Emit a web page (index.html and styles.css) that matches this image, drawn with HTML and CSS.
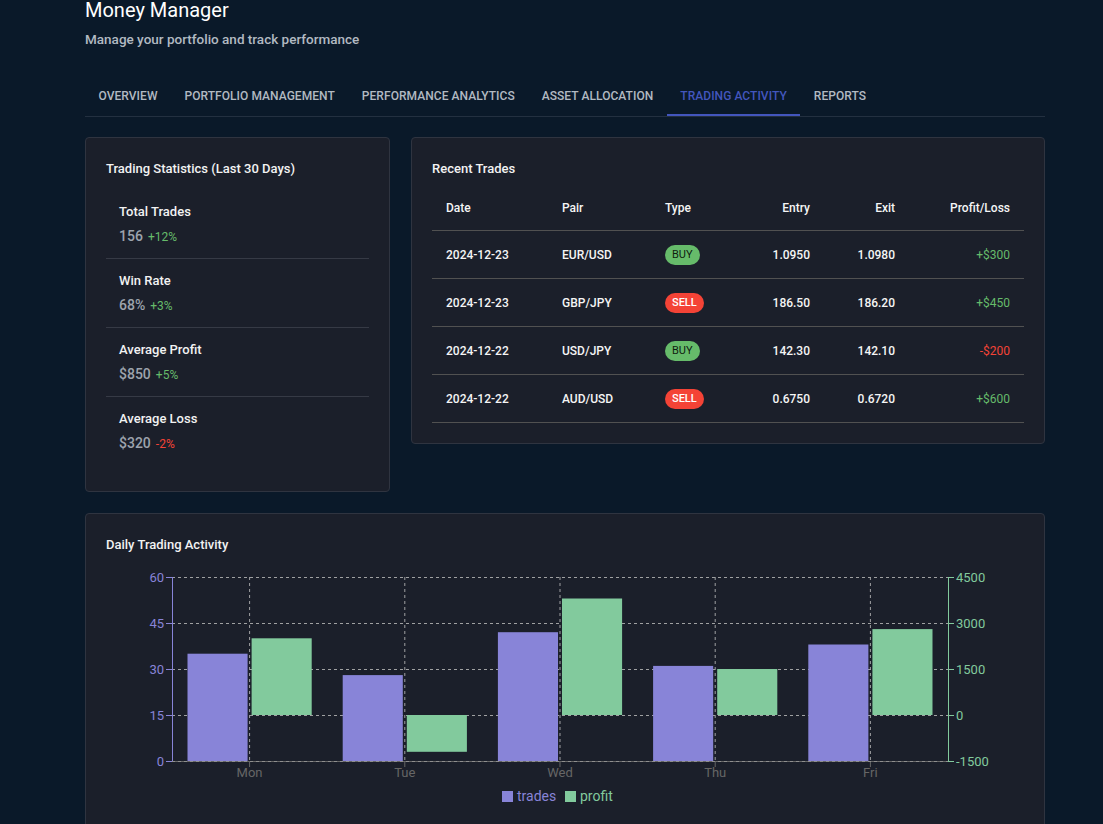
FILE: index.html
```html
<!DOCTYPE html>
<html lang="en">
<head>
<meta charset="utf-8">
<title>Money Manager</title>
<link rel="stylesheet" href="styles.css">
</head>
<body>
<div class="page">
  <header class="head">
    <h1 class="title">Money Manager</h1>
    <p class="subtitle">Manage your portfolio and track performance</p>
  </header>

  <nav class="tabs">
    <span class="tab">Overview</span>
    <span class="tab">Portfolio Management</span>
    <span class="tab">Performance Analytics</span>
    <span class="tab">Asset Allocation</span>
    <span class="tab active">Trading Activity</span>
    <span class="tab">Reports</span>
  </nav>

  <div class="grid">
    <section class="card">
      <h2 class="card-title">Trading Statistics (Last 30 Days)</h2>
      <ul class="stats">
        <li class="stat">
          <div class="stat-label">Total Trades</div>
          <div class="stat-value">156 <span class="chg up">+12%</span></div>
        </li>
        <li class="stat">
          <div class="stat-label">Win Rate</div>
          <div class="stat-value">68% <span class="chg up">+3%</span></div>
        </li>
        <li class="stat">
          <div class="stat-label">Average Profit</div>
          <div class="stat-value">$850 <span class="chg up">+5%</span></div>
        </li>
        <li class="stat">
          <div class="stat-label">Average Loss</div>
          <div class="stat-value">$320 <span class="chg down">-2%</span></div>
        </li>
      </ul>
    </section>

    <section class="card">
      <h2 class="card-title">Recent Trades</h2>
      <div class="table">
        <div class="trow thead">
          <span>Date</span><span>Pair</span><span>Type</span><span class="r">Entry</span><span class="r">Exit</span><span class="r">Profit/Loss</span>
        </div>
        <div class="trow">
          <span>2024-12-23</span><span>EUR/USD</span><span><em class="chip buy">BUY</em></span><span class="r">1.0950</span><span class="r">1.0980</span><span class="r pl up">+$300</span>
        </div>
        <div class="trow">
          <span>2024-12-23</span><span>GBP/JPY</span><span><em class="chip sell">SELL</em></span><span class="r">186.50</span><span class="r">186.20</span><span class="r pl up">+$450</span>
        </div>
        <div class="trow">
          <span>2024-12-22</span><span>USD/JPY</span><span><em class="chip buy">BUY</em></span><span class="r">142.30</span><span class="r">142.10</span><span class="r pl down">-$200</span>
        </div>
        <div class="trow">
          <span>2024-12-22</span><span>AUD/USD</span><span><em class="chip sell">SELL</em></span><span class="r">0.6750</span><span class="r">0.6720</span><span class="r pl up">+$600</span>
        </div>
      </div>
    </section>
  </div>

  <section class="card chart-card">
    <h2 class="card-title">Daily Trading Activity</h2>
    <svg class="chart" width="918" height="270" viewBox="0 0 918 270" xmlns="http://www.w3.org/2000/svg">
      <g class="gridlines" stroke="#b8b8b8" stroke-dasharray="3 3" stroke-width="1" opacity="0.85">
        <line x1="66" y1="11.5" x2="842" y2="11.5"/>
        <line x1="66" y1="57.5" x2="842" y2="57.5"/>
        <line x1="66" y1="103.5" x2="842" y2="103.5"/>
        <line x1="66" y1="149.5" x2="842" y2="149.5"/>
        <line x1="143.6" y1="11" x2="143.6" y2="195"/>
        <line x1="298.8" y1="11" x2="298.8" y2="195"/>
        <line x1="454" y1="11" x2="454" y2="195"/>
        <line x1="609.2" y1="11" x2="609.2" y2="195"/>
        <line x1="764.4" y1="11" x2="764.4" y2="195"/>
      </g>
      <g fill="#8884d8">
        <rect x="81.5" y="87.7" width="60.1" height="107.3"/>
        <rect x="236.7" y="109.1" width="60.1" height="85.9"/>
        <rect x="391.9" y="66.2" width="60.1" height="128.8"/>
        <rect x="547.1" y="99.9" width="60.1" height="95.1"/>
        <rect x="702.3" y="78.5" width="60.1" height="116.5"/>
      </g>
      <g fill="#82ca9d">
        <rect x="145.6" y="72.3" width="60.1" height="76.7"/>
        <rect x="300.8" y="149" width="60.1" height="36.8"/>
        <rect x="456" y="32.5" width="60.1" height="116.5"/>
        <rect x="611.2" y="103" width="60.1" height="46"/>
        <rect x="766.4" y="63.1" width="60.1" height="85.9"/>
      </g>
      <g stroke="#666">
        <line x1="66" y1="195.5" x2="842" y2="195.5"/>
        <line x1="143.6" y1="195" x2="143.6" y2="201"/>
        <line x1="298.8" y1="195" x2="298.8" y2="201"/>
        <line x1="454" y1="195" x2="454" y2="201"/>
        <line x1="609.2" y1="195" x2="609.2" y2="201"/>
        <line x1="764.4" y1="195" x2="764.4" y2="201"/>
      </g>
      <line x1="66" y1="195.5" x2="842" y2="195.5" stroke="#b8b8b8" stroke-dasharray="3 3" opacity="0.5"/>
      <g stroke="#8884d8">
        <line x1="66.5" y1="11" x2="66.5" y2="195"/>
        <line x1="60" y1="11.5" x2="66" y2="11.5"/>
        <line x1="60" y1="57.5" x2="66" y2="57.5"/>
        <line x1="60" y1="103.5" x2="66" y2="103.5"/>
        <line x1="60" y1="149.5" x2="66" y2="149.5"/>
        <line x1="60" y1="195.5" x2="66" y2="195.5"/>
      </g>
      <g stroke="#82ca9d">
        <line x1="842.5" y1="11" x2="842.5" y2="195"/>
        <line x1="842" y1="11.5" x2="848" y2="11.5"/>
        <line x1="842" y1="57.5" x2="848" y2="57.5"/>
        <line x1="842" y1="103.5" x2="848" y2="103.5"/>
        <line x1="842" y1="149.5" x2="848" y2="149.5"/>
        <line x1="842" y1="195.5" x2="848" y2="195.5"/>
      </g>
      <g class="tick" fill="#8884d8" text-anchor="end">
        <text x="58" y="16">60</text>
        <text x="58" y="62">45</text>
        <text x="58" y="108">30</text>
        <text x="58" y="154">15</text>
        <text x="58" y="200">0</text>
      </g>
      <g class="tick" fill="#82ca9d" text-anchor="start">
        <text x="850" y="16">4500</text>
        <text x="850" y="62">3000</text>
        <text x="850" y="108">1500</text>
        <text x="850" y="154">0</text>
        <text x="850" y="200">-1500</text>
      </g>
      <g class="tick" fill="#666" text-anchor="middle">
        <text x="143.6" y="211">Mon</text>
        <text x="298.8" y="211">Tue</text>
        <text x="454" y="211">Wed</text>
        <text x="609.2" y="211">Thu</text>
        <text x="764.4" y="211">Fri</text>
      </g>
      <g class="legend">
        <rect x="396" y="225" width="11" height="11" fill="#8884d8"/>
        <text x="411" y="235" fill="#8884d8">trades</text>
        <rect x="459" y="225" width="11" height="11" fill="#82ca9d"/>
        <text x="474" y="235" fill="#82ca9d">profit</text>
      </g>
    </svg>
  </section>
</div>
</body>
</html>
```

FILE: styles.css
```css
* { box-sizing: border-box; }

html, body {
  margin: 0;
  padding: 0;
  background: #0a1929;
  font-family: Roboto, "Noto Sans", "Liberation Sans", sans-serif;
  color: #ffffff;
}

.page {
  width: 960px;
  margin: 0 0 0 85px;
  padding-bottom: 40px;
}

.title {
  margin: 0;
  font-size: 20px;
  line-height: 21px;
  font-weight: 400;
  color: #ffffff;
}

.subtitle {
  margin: 8px 0 0;
  font-size: 13.5px;
  line-height: 20px;
  font-weight: 500;
  color: #b2bac2;
}

.tabs {
  display: flex;
  margin-top: 25px;
  border-bottom: 1px solid #233040;
}

.tab {
  height: 42px;
  display: flex;
  align-items: center;
  padding: 3px 13.5px 0;
  font-size: 12px;
  font-weight: 500;
  letter-spacing: 0.05px;
  text-transform: uppercase;
  color: #b2bac2;
  border-bottom: 2px solid transparent;
}

.tab.active {
  color: #4356bd;
  border-bottom-color: #4356bd;
}

.grid {
  display: grid;
  grid-template-columns: 305px 1fr;
  column-gap: 21px;
  align-items: start;
  margin-top: 20px;
}

.card {
  background: #1b1f2a;
  border: 1px solid #2f3440;
  border-radius: 4px;
  padding: 20px;
}

.card-title {
  margin: 0;
  padding-top: 1px;
  font-size: 13px;
  line-height: 20px;
  font-weight: 500;
  color: #f2f2f2;
}

.stats {
  list-style: none;
  margin: 11px 0 0;
  padding: 0 0 6px;
}

.stat {
  padding: 12px 13px;
  border-bottom: 1px solid #363a45;
}

.stat:last-child { border-bottom: none; }

.stat-label {
  font-size: 13px;
  line-height: 20px;
  font-weight: 500;
  color: #f2f2f2;
}

.stat-value {
  display: flex;
  align-items: baseline;
  gap: 5px;
  height: 20px;
  margin-top: 4px;
  font-size: 14px;
  line-height: 20px;
  font-weight: 500;
  color: #9da3ad;
}

.chg {
  font-size: 12px;
  line-height: 20px;
  font-weight: 400;
}

.up { color: #66bb6a; }
.down { color: #f44336; }

.table { margin-top: 7px; }

.trow {
  display: grid;
  grid-template-columns: 116px 103px 90px 83px 85px 115px;
  align-items: center;
  height: 48px;
  border-bottom: 1px solid #515151;
  font-size: 12px;
  font-weight: 500;
  color: #f5f5f5;
}

.trow.thead { height: 45px; }

.trow > span { padding: 0 14px; }

.trow > .r { text-align: right; }

.trow > .pl { font-weight: 400; }

.trow > .pl.up { color: #66bb6a; }
.trow > .pl.down { color: #f44336; }

.chip {
  display: inline-flex;
  align-items: center;
  height: 20px;
  padding: 0 7px;
  border-radius: 10px;
  font-style: normal;
  font-size: 11px;
  font-weight: 400;
}

.chip.buy { background: #66bb6a; color: rgba(0, 0, 0, 0.87); }
.chip.sell { background: #f44336; color: #ffffff; font-weight: 500; }

.chart-card {
  margin-top: 21px;
  height: 380px;
}

.chart {
  display: block;
  margin-top: 11px;
}

.tick { font-size: 13px; font-family: Roboto, sans-serif; }
.legend { font-size: 14px; font-family: Roboto, sans-serif; }
```
